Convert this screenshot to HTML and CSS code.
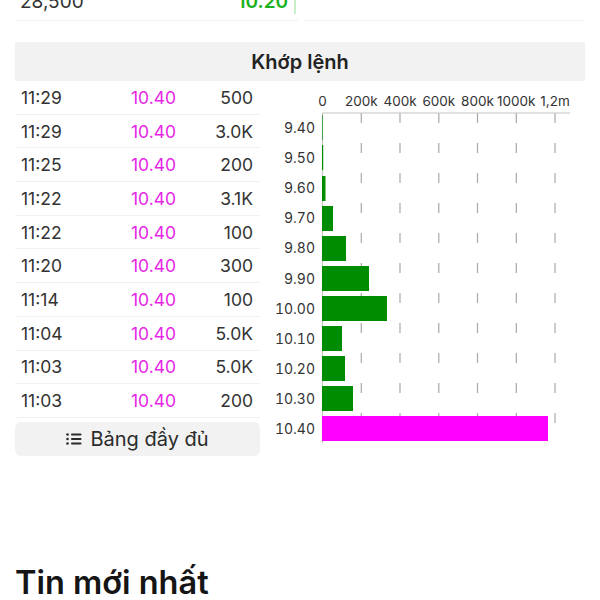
FILE: index.html
```html
<!DOCTYPE html>
<html lang="vi">
<head>
    <meta charset="UTF-8">
    <title>Khớp lệnh</title>
    <link rel="stylesheet" href="styles.css">
</head>
<body>
    <div class="depth">
        <div class="depth-cell">
            <span class="depth-vol">28,500</span>
            <span class="depth-price">10.20</span>
            <span class="depth-mark"></span>
        </div>
        <div class="depth-cell"></div>
    </div>

    <div class="section-title">Khớp lệnh</div>

    <div class="match">
        <div class="match-left">
            <div class="trade-row"><span>11:29</span><span class="trade-price">10.40</span><span class="trade-vol">500</span></div>
            <div class="trade-row"><span>11:29</span><span class="trade-price">10.40</span><span class="trade-vol">3.0K</span></div>
            <div class="trade-row"><span>11:25</span><span class="trade-price">10.40</span><span class="trade-vol">200</span></div>
            <div class="trade-row"><span>11:22</span><span class="trade-price">10.40</span><span class="trade-vol">3.1K</span></div>
            <div class="trade-row"><span>11:22</span><span class="trade-price">10.40</span><span class="trade-vol">100</span></div>
            <div class="trade-row"><span>11:20</span><span class="trade-price">10.40</span><span class="trade-vol">300</span></div>
            <div class="trade-row"><span>11:14</span><span class="trade-price">10.40</span><span class="trade-vol">100</span></div>
            <div class="trade-row"><span>11:04</span><span class="trade-price">10.40</span><span class="trade-vol">5.0K</span></div>
            <div class="trade-row"><span>11:03</span><span class="trade-price">10.40</span><span class="trade-vol">5.0K</span></div>
            <div class="trade-row"><span>11:03</span><span class="trade-price">10.40</span><span class="trade-vol">200</span></div>
            <div class="full-btn">
                <svg class="list-icon" width="16" height="14" viewBox="0 0 16 14">
                    <circle cx="1.5" cy="2.5" r="1.3"/>
                    <circle cx="1.5" cy="7" r="1.3"/>
                    <circle cx="1.5" cy="11.5" r="1.3"/>
                    <rect x="5" y="1.6" width="10.5" height="1.8" rx="0.9"/>
                    <rect x="5" y="6.1" width="10.5" height="1.8" rx="0.9"/>
                    <rect x="5" y="10.6" width="10.5" height="1.8" rx="0.9"/>
                </svg>
                <span>Bảng đầy đủ</span>
            </div>
        </div>

        <svg class="vol-chart" width="325" height="370" viewBox="0 0 325 370">
            <g class="x-labels">
                <text x="62.5" y="25">0</text>
                <text x="101.3" y="25">200k</text>
                <text x="140" y="25">400k</text>
                <text x="178.8" y="25">600k</text>
                <text x="217.5" y="25">800k</text>
                <text x="256.3" y="25">1000k</text>
                <text x="295" y="25">1,2m</text>
            </g>
            <g class="grid">
                <line x1="101.3" y1="32" x2="101.3" y2="362"/>
                <line x1="140" y1="32" x2="140" y2="362"/>
                <line x1="178.8" y1="32" x2="178.8" y2="362"/>
                <line x1="217.5" y1="32" x2="217.5" y2="362"/>
                <line x1="256.3" y1="32" x2="256.3" y2="362"/>
                <line x1="295" y1="32" x2="295" y2="362"/>
            </g>
            <g class="axis">
                <line x1="62.5" y1="32" x2="310" y2="32"/>
                <line x1="62.5" y1="32" x2="62.5" y2="362"/>
            </g>
            <g class="y-labels">
                <text x="55" y="52">9.40</text>
                <text x="55" y="82">9.50</text>
                <text x="55" y="112">9.60</text>
                <text x="55" y="142">9.70</text>
                <text x="55" y="172">9.80</text>
                <text x="55" y="203">9.90</text>
                <text x="55" y="233">10.00</text>
                <text x="55" y="263">10.10</text>
                <text x="55" y="293">10.20</text>
                <text x="55" y="323">10.30</text>
                <text x="55" y="353">10.40</text>
            </g>
            <g class="bars">
                <rect x="62" y="34" width="0.6" height="25"/>
                <rect x="62" y="64" width="1.2" height="25"/>
                <rect x="62" y="95" width="3.5" height="25"/>
                <rect x="62" y="125" width="11" height="25"/>
                <rect x="62" y="155" width="24" height="25"/>
                <rect x="62" y="185" width="47" height="25"/>
                <rect x="62" y="215" width="65" height="25"/>
                <rect x="62" y="245" width="20" height="25"/>
                <rect x="62" y="275" width="23" height="25"/>
                <rect x="62" y="305" width="31" height="25"/>
                <rect class="bar-last" x="62" y="335" width="226" height="25"/>
            </g>
        </svg>
    </div>

    <h2 class="news-title">Tin mới nhất</h2>
</body>
</html>
```

FILE: styles.css
```css
body {
    margin: 0;
    font-family: Inter, "Noto Sans", sans-serif;
    color: #2b2b2b;
    background: #fff;
    overflow: hidden;
}

.depth {
    display: grid;
    grid-template-columns: 283px 280px;
    gap: 7px;
    margin: -17px 15px 0;
}

.depth-cell {
    height: 37px;
    border-bottom: 1px solid #f0f0f0;
    display: flex;
    align-items: center;
    position: relative;
    font-size: 19px;
    padding: 0 10px 0 5px;
}

.depth-vol {
    flex: 1;
    color: #333;
}

.depth-price {
    color: #1bb31b;
    font-weight: 600;
}

.depth-mark {
    position: absolute;
    right: 2px;
    top: 12px;
    bottom: 6px;
    width: 2px;
    background: #c9efc9;
}

.section-title {
    margin: 21px 15px 0;
    height: 39px;
    background: #f2f2f2;
    display: flex;
    align-items: center;
    justify-content: center;
    font-size: 20px;
    font-weight: 600;
    color: #222;
}

.match {
    display: flex;
    padding-left: 15px;
}

.match-left {
    width: 245px;
}

.trade-row {
    height: 32.7px;
    border-bottom: 1px solid #f0f0f0;
    display: grid;
    grid-template-columns: 110px 60px 1fr;
    align-items: center;
    padding: 0 7px 0 6px;
    font-size: 17.5px;
    color: #333;
}

.trade-price {
    color: #e626e6;
}

.trade-vol {
    text-align: right;
}

.full-btn {
    margin-top: 4px;
    height: 34px;
    background: #f2f2f2;
    border-radius: 6px;
    display: flex;
    align-items: center;
    justify-content: center;
    gap: 8px;
    font-size: 20px;
    color: #2b2b2b;
}

.list-icon {
    fill: #2b2b2b;
}

.vol-chart {
    display: block;
    font-size: 13.5px;
}

.x-labels text {
    text-anchor: middle;
    fill: #333;
}

.y-labels text {
    text-anchor: end;
    fill: #333;
    font-size: 14px;
    font-variant-numeric: tabular-nums;
}

.grid line {
    stroke: #a8a8a8;
    stroke-width: 1.2;
    stroke-dasharray: 10 20;
}

.axis line {
    stroke: #c4c4c4;
    stroke-width: 1.2;
}

.bars rect {
    fill: #008c00;
}

.bars .bar-last {
    fill: #ff00ff;
}

.news-title {
    margin: 109px 15px 0;
    font-size: 32.5px;
    line-height: 36px;
    font-weight: 600;
    color: #151515;
}
```
